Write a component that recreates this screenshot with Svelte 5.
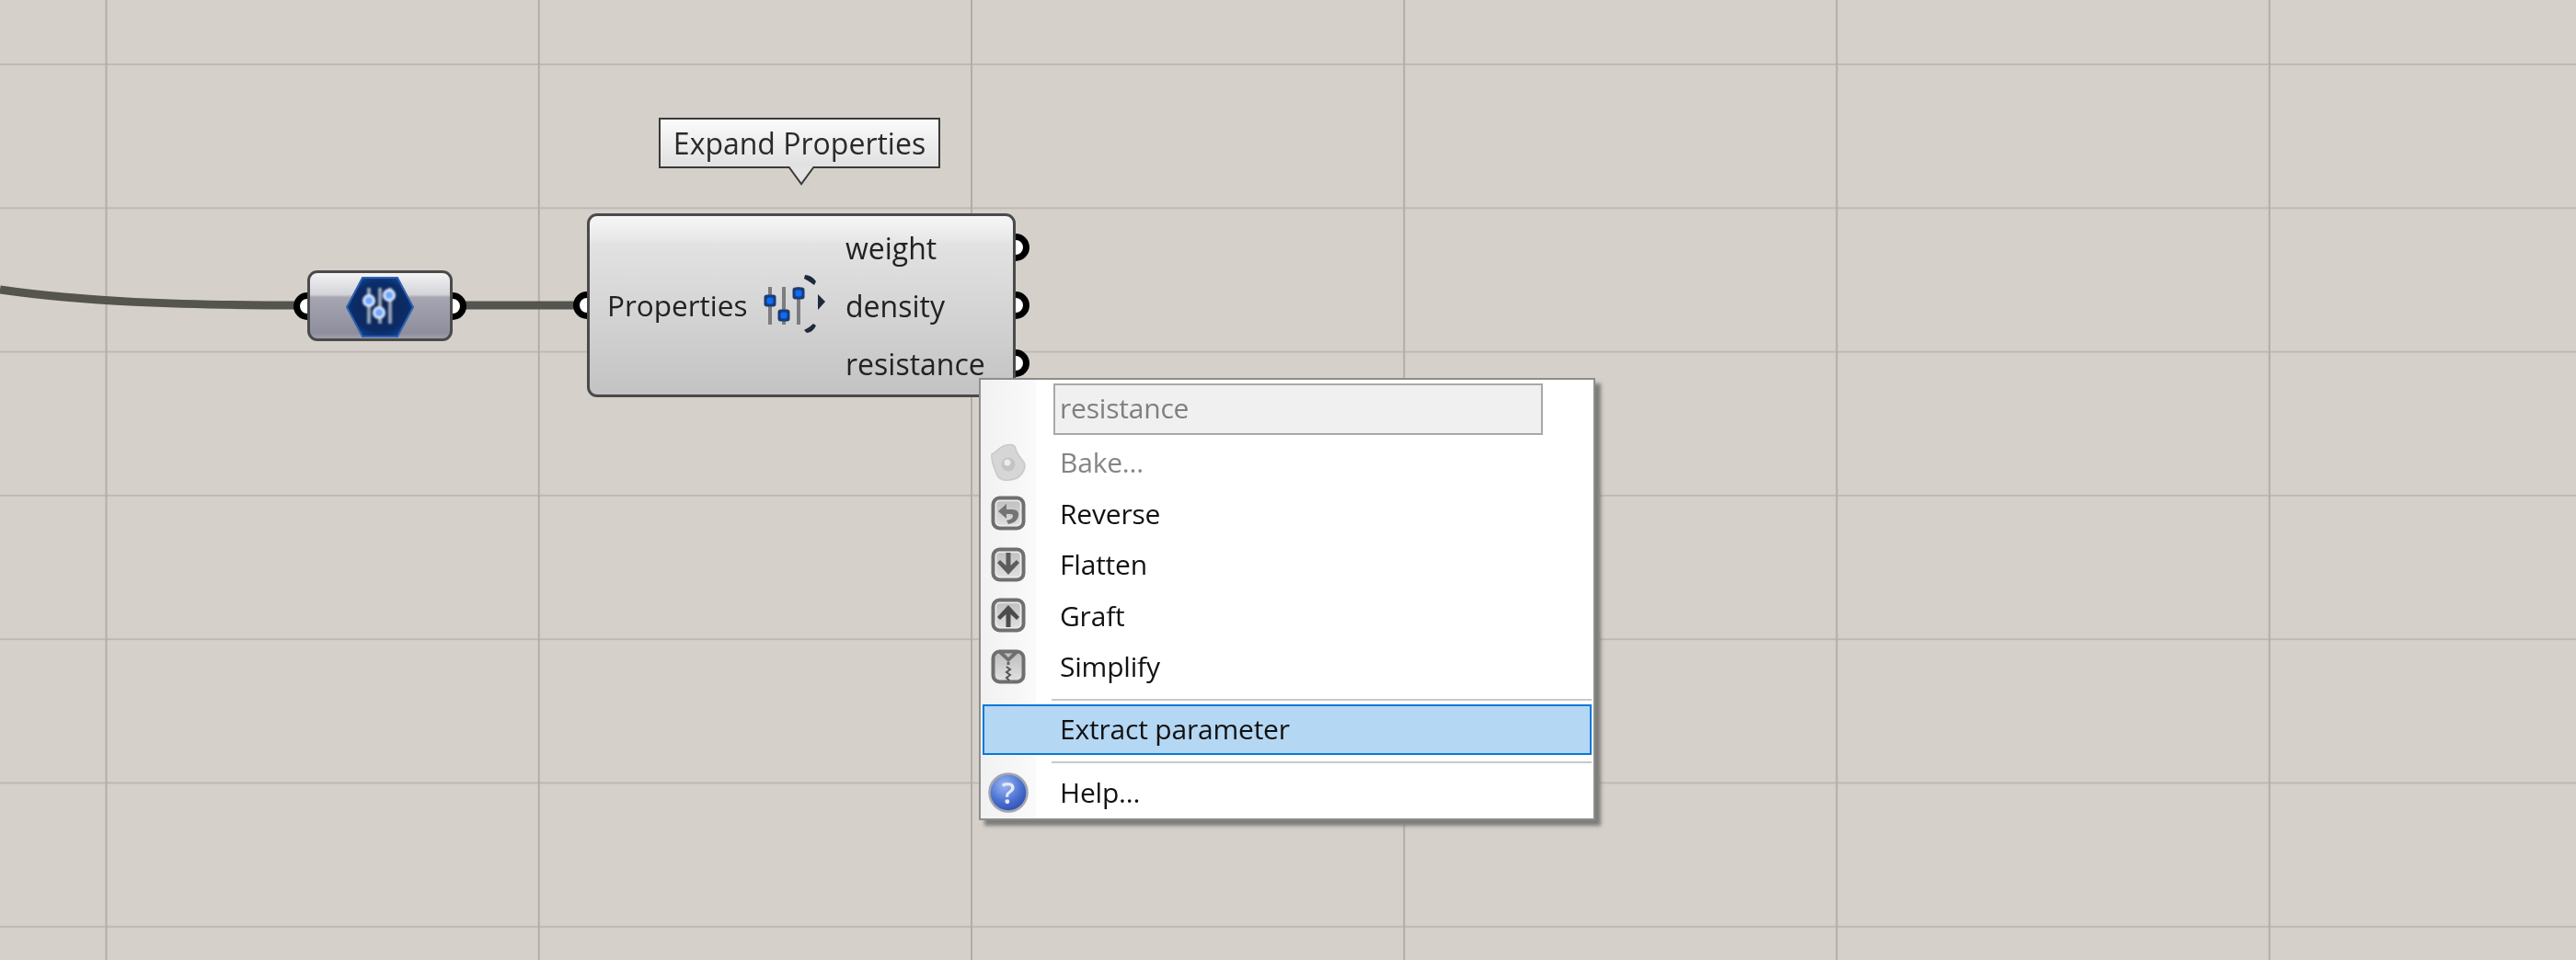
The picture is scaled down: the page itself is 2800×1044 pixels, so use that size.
<script lang="ts">
  const outputs = ['weight', 'density', 'resistance'];
</script>

<div class="canvas">
  <svg class="wires" width="2800" height="1044" viewBox="0 0 2800 1044">
    <path d="M0 315 C90 328 190 332 330 332" />
    <path d="M495 332 H630" />
  </svg>

  <div class="tooltip">
    Expand Properties
    <svg class="tip-arrow" width="30" height="22" viewBox="0 0 30 22">
      <path d="M1 0 L15 19 L29 0" fill="#e3e3e3" stroke="#3a3a3a" stroke-width="2" />
    </svg>
  </div>

  <div class="node small">
    <span class="port left"></span>
    <span class="port right"></span>
    <svg class="hex" width="74" height="66" viewBox="0 0 74 66">
      <defs>
        <radialGradient id="hexFill" cx="50%" cy="50%" r="60%">
          <stop offset="0" stop-color="#10264f" />
          <stop offset=".7" stop-color="#0b2c68" />
          <stop offset="1" stop-color="#114a9c" />
        </radialGradient>
      </defs>
      <path d="M18 1 H56 L73 33 L56 65 H18 L1 33 Z" fill="url(#hexFill)" stroke="#2f62b0" stroke-width="2" />
      <g class="soft">
        <path d="M25 12 V51 M37 12 V51 M48 12 V51" stroke="#c9ced8" stroke-width="4" opacity=".75" />
        <circle cx="25" cy="26" r="7" fill="#dfe9fb" />
        <circle cx="36" cy="39" r="7" fill="#dfe9fb" />
        <circle cx="47" cy="20" r="7" fill="#dfe9fb" />
        <circle cx="25" cy="26" r="4" fill="#6ea6ff" />
        <circle cx="36" cy="39" r="4" fill="#6ea6ff" />
        <circle cx="47" cy="20" r="4" fill="#6ea6ff" />
      </g>
    </svg>
  </div>

  <div class="node main">
    <span class="port left"></span>
    <div class="title">
      <span>Properties</span>
      <svg class="sliders" width="72" height="68" viewBox="0 0 72 68">
        <g class="soft-sm">
          <path d="M10 16 V57 M25 16 V57 M41 16 V57" stroke="#7b7d80" stroke-width="4" />
          <rect x="3.5" y="24.5" width="13" height="13" rx="3" fill="#1c3c74" />
          <rect x="18.5" y="40.5" width="13" height="13" rx="3" fill="#1c3c74" />
          <rect x="34.5" y="16.5" width="13" height="13" rx="3" fill="#1c3c74" />
          <rect x="6.5" y="27.5" width="7" height="7" rx="2" fill="#0a6cff" />
          <rect x="21.5" y="43.5" width="7" height="7" rx="2" fill="#0a6cff" />
          <rect x="37.5" y="19.5" width="7" height="7" rx="2" fill="#0a6cff" />
          <path d="M48 3 Q55 3 60 10 L58 14 Q53 10 47 7 Z" fill="#1e2a3c" />
          <path d="M62 24 L70 32 L62 41 Z" fill="#1e2a3c" />
          <path d="M47 63 Q53 60 57 56 L60 58 Q57 65 50 66 Z" fill="#1e2a3c" />
        </g>
      </svg>
    </div>
    <ul class="outputs">
      {#each outputs as name}
        <li>{name}<span class="port right"></span></li>
      {/each}
    </ul>
  </div>

  <div class="menu">
    <div class="row input-row">
      <div class="fake-input">resistance</div>
    </div>
    <div class="row disabled">
      <span class="ico">
        <svg width="40" height="42" viewBox="0 0 40 42">
          <path d="M2 12 C8 9 11 3 18 2 C23 1 27 1 28 6 C29 11 32 14 35 18 C39 22 39 27 35 33 C31 38 27 40 21 40 C15 41 9 39 7 33 C6 28 1 22 2 12 Z" fill="#d6d6d6" stroke="#c8c8c8" stroke-width="1.5" />
          <circle cx="20" cy="23" r="7.5" fill="#c4c4c4" />
          <circle cx="19" cy="21" r="3.5" fill="#ececec" />
        </svg>
      </span>
      <span>Bake...</span>
    </div>
    <div class="row">
      <span class="ico">
        <svg width="38" height="38" viewBox="0 0 38 38">
          <rect x="2.5" y="2.5" width="33" height="33" rx="7" fill="url(#boxFill)" stroke="#6f6f6f" stroke-width="4" />
          <rect x="5.5" y="5.5" width="27" height="27" rx="4" fill="none" stroke="#ececec" stroke-width="1.5" />
          <path d="M10 15 H23 Q31 15 30 22 Q29 29 19 31 L17 27 Q24 26 24 22 Q24 20 21 20 H17 L17 25 L8 17 L17 9 V15 Z" fill="#747474" />
        </svg>
      </span>
      <span>Reverse</span>
    </div>
    <div class="row">
      <span class="ico">
        <svg width="38" height="38" viewBox="0 0 38 38">
          <rect x="2.5" y="2.5" width="33" height="33" rx="7" fill="url(#boxFill)" stroke="#6f6f6f" stroke-width="4" />
          <rect x="5.5" y="5.5" width="27" height="27" rx="4" fill="none" stroke="#ececec" stroke-width="1.5" />
          <path d="M16.5 6 H21.5 V20 L28 14 L31 17 L19 30 L7 17 L10 14 L16.5 20 Z" fill="#5c5c5c" />
        </svg>
      </span>
      <span>Flatten</span>
    </div>
    <div class="row">
      <span class="ico">
        <svg width="38" height="38" viewBox="0 0 38 38">
          <rect x="2.5" y="2.5" width="33" height="33" rx="7" fill="url(#boxFill)" stroke="#6f6f6f" stroke-width="4" />
          <rect x="5.5" y="5.5" width="27" height="27" rx="4" fill="none" stroke="#ececec" stroke-width="1.5" />
          <path d="M16.5 32 H21.5 V18 L28 24 L31 21 L19 8 L7 21 L10 24 L16.5 18 Z" fill="#4c4c4c" />
        </svg>
      </span>
      <span>Graft</span>
    </div>
    <div class="row">
      <span class="ico">
        <svg width="38" height="38" viewBox="0 0 38 38">
          <defs>
            <linearGradient id="boxFill" x1="0" y1="0" x2="0" y2="1">
              <stop offset="0" stop-color="#bdbdbd" />
              <stop offset="1" stop-color="#e2e2e2" />
            </linearGradient>
          </defs>
          <rect x="2.5" y="2.5" width="33" height="33" rx="7" fill="url(#boxFill)" stroke="#6f6f6f" stroke-width="4" />
          <path d="M8 4 L19 14 L30 4 H24 L19 9 L14 4 Z" fill="#707070" />
          <path d="M19 14 V17" stroke="#666" stroke-width="3" />
          <path d="M17 19 L21 22 L17 25 L21 28 L17 31 L20 34" fill="none" stroke="#555" stroke-width="2" />
        </svg>
      </span>
      <span>Simplify</span>
    </div>
    <div class="sep first"></div>
    <div class="row active">
      <span class="ico"></span>
      <span>Extract parameter</span>
    </div>
    <div class="sep second"></div>
    <div class="row help">
      <span class="ico">
        <svg width="46" height="46" viewBox="0 0 46 46">
          <defs>
            <radialGradient id="helpFill" cx="40%" cy="30%" r="75%">
              <stop offset="0" stop-color="#9db8f2" />
              <stop offset=".6" stop-color="#4a70d0" />
              <stop offset="1" stop-color="#2c4cae" />
            </radialGradient>
          </defs>
          <circle cx="23" cy="23" r="20.5" fill="url(#helpFill)" stroke="#a2a6b0" stroke-width="2.5" />
          <text x="23" y="35" text-anchor="middle" class="q">?</text>
        </svg>
      </span>
      <span>Help...</span>
    </div>
  </div>
</div>

<style>
  :global(body) {
    margin: 0;
    background: #d5d1ca;
  }

  .canvas {
    position: relative;
    z-index: 0;
    width: 2800px;
    height: 1044px;
    overflow: hidden;
    font-family: 'Open Sans', 'Noto Sans', sans-serif;
    color: #111;
    background-color: #d5d1ca;
    background-image:
      linear-gradient(to right, #b2aea7 2px, transparent 2px),
      linear-gradient(to bottom, #bebab3 2px, transparent 2px);
    background-size: 470.25px 100%, 100% 156.3px;
    background-position: 114.5px 0, 0 69px;
    filter: blur(0.6px);
  }

  .wires {
    position: absolute;
    left: 0;
    top: 0;
    z-index: -2;
  }

  .wires path {
    fill: none;
    stroke: #55544e;
    stroke-width: 9;
  }

  .tooltip {
    position: absolute;
    left: 716px;
    top: 128px;
    width: 306px;
    height: 55px;
    box-sizing: border-box;
    display: flex;
    align-items: center;
    justify-content: center;
    border: 2px solid #3a3a3a;
    background: linear-gradient(#fbfbfb, #e0e0e0);
    color: #2a2a2a;
    font-size: 32px;
    white-space: nowrap;
  }

  .tip-arrow {
    position: absolute;
    left: 138px;
    top: 51px;
  }

  .node {
    position: absolute;
    box-sizing: border-box;
    border: 3px solid #4a4a4a;
  }

  .node.small {
    left: 334px;
    top: 294px;
    width: 158px;
    height: 77px;
    border-radius: 11px;
    display: flex;
    align-items: center;
    justify-content: center;
    background: linear-gradient(#f4f4f6 0, #d2d2d8 33%, #a6a6b2 37%, #8e8e9e 92%, #a0a0ac 100%);
  }

  .hex {
    margin-top: 2px;
  }

  .soft {
    filter: blur(1.2px);
  }

  .soft-sm {
    filter: blur(0.7px);
  }

  .node.main {
    left: 638px;
    top: 232px;
    width: 466px;
    height: 200px;
    border-radius: 11px;
    display: flex;
    align-items: stretch;
    background: linear-gradient(#f6f6f6 0, #e8e8e8 13%, #e2e2e2 16%, #c3c3c3 100%);
  }

  .port {
    position: absolute;
    z-index: -1;
    box-sizing: border-box;
    width: 30px;
    height: 30px;
    border: 7px solid #000;
    border-radius: 50%;
    background: #fff;
  }

  .port.left {
    left: -18px;
    top: 50%;
    margin-top: -15px;
  }

  .port.right {
    right: -18px;
    top: 50%;
    margin-top: -15px;
  }

  .title {
    display: flex;
    align-items: center;
    gap: 14px;
    box-sizing: border-box;
    padding: 0 0 2px 19px;
    font-size: 31.5px;
    color: #222;
    width: 278px;
    flex: none;
  }

  .sliders {
    margin-top: -2px;
    flex: none;
  }

  .outputs {
    list-style: none;
    margin: 0;
    padding: 0;
    flex: 1;
    display: flex;
    flex-direction: column;
    justify-content: center;
    font-size: 32px;
    color: #222;
  }

  .outputs li {
    display: flex;
    align-items: center;
    height: 63px;
  }

  .outputs .port {
    margin-top: 0;
    top: auto;
  }

  .menu {
    position: absolute;
    left: 1064px;
    top: 411px;
    width: 670px;
    height: 481px;
    box-sizing: border-box;
    display: flex;
    flex-direction: column;
    padding-top: 2px;
    background: linear-gradient(to right, #f1f1f1, #fafafa 60px, #fff 60px);
    border: 2px solid #8d8d8d;
    box-shadow: 6px 6px 4px #7d7d7a;
    font-size: 30px;
    letter-spacing: -0.2px;
  }

  .row {
    display: flex;
    align-items: center;
    height: 55.5px;
    flex: none;
  }

  .input-row {
    height: 60px;
    padding-left: 79px;
  }

  .fake-input {
    box-sizing: border-box;
    width: 532px;
    height: 56px;
    line-height: 50px;
    padding-left: 5px;
    border: 2px solid #a8a8a8;
    background: #f0f0f0;
    color: #7f7f7f;
  }

  .disabled {
    color: #858585;
  }

  .ico {
    width: 60px;
    margin-right: 26px;
    display: flex;
    justify-content: center;
    flex: none;
  }

  .sep {
    height: 2px;
    margin-left: 77px;
    margin-right: 2px;
    background: #c9c9c9;
    flex: none;
  }

  .sep.first {
    margin-top: 7px;
    margin-bottom: 4px;
  }

  .sep.second {
    margin-top: 7px;
    margin-bottom: 4px;
  }

  .row.active {
    height: 55px;
    margin: 0 2px;
    padding-bottom: 2px;
    background: #b4d7f3;
    border: 2px solid #0a78d7;
    box-sizing: border-box;
  }

  .row.active .ico {
    width: 56px;
  }

  .help {
    height: 56px;
  }

  .q {
    font-family: 'Open Sans', sans-serif;
    font-size: 32px;
    font-weight: 600;
    fill: #e2e9fb;
  }
</style>
